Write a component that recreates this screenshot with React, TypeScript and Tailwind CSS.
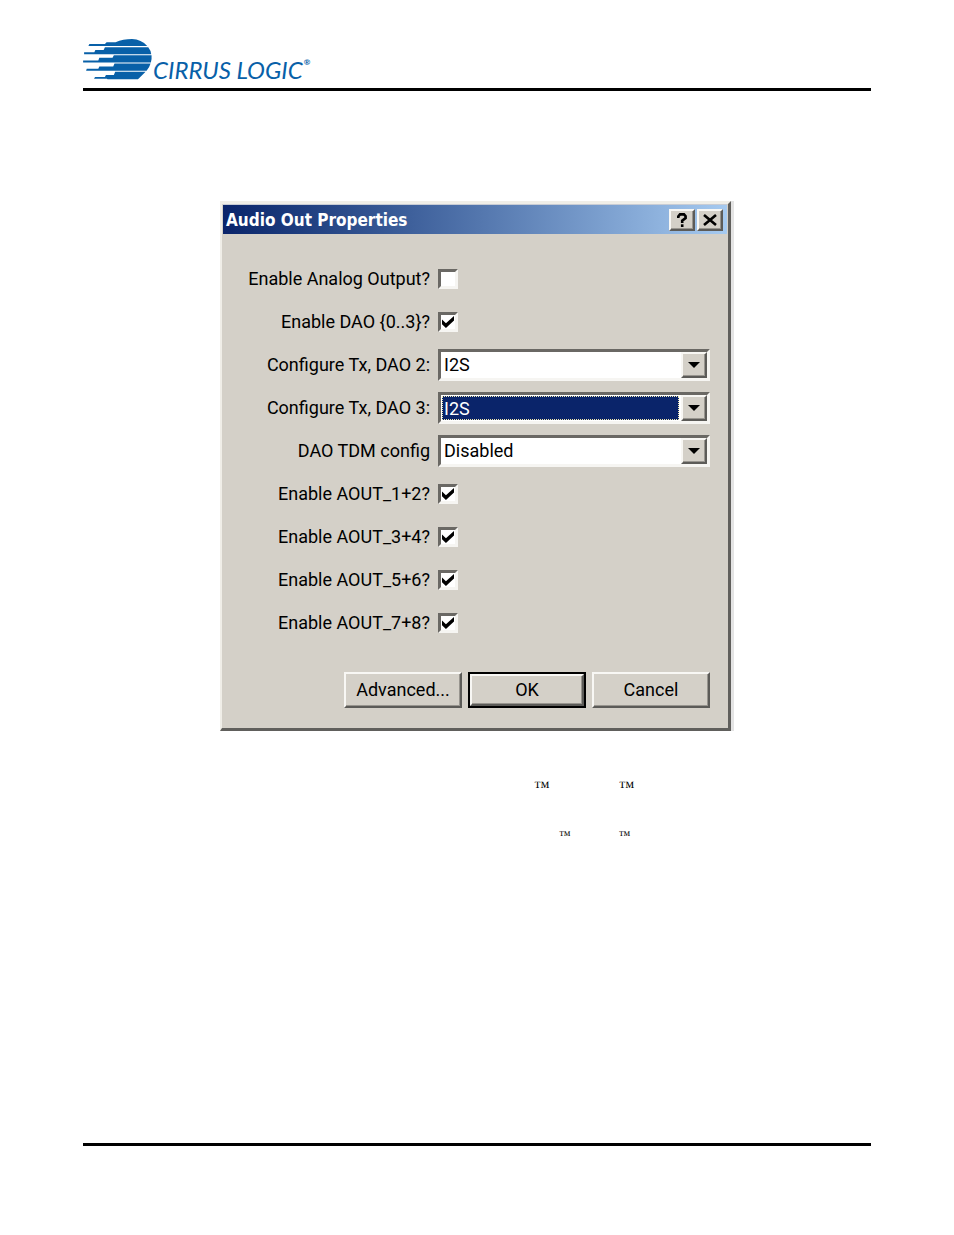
import { useState } from "react";

interface CheckRowProps {
  id: string;
  label: string;
  defaultChecked?: boolean;
}

interface SelectRowProps {
  id: string;
  label: string;
  value: string;
  options: string[];
  focused?: boolean;
}

const raised =
  "bg-[#d4d0c8] border-2 border-t-[#f8f7f4] border-l-[#f8f7f4] border-r-[#5c5b58] border-b-[#5c5b58] shadow-[inset_-1px_-1px_0_#98958f]";
const sunken =
  "border-[3px] border-t-[#6a6864] border-l-[#6a6864] border-r-[#f6f5f2] border-b-[#f6f5f2]";

function Logo() {
  return (
    <a href="#" className="flex items-end text-[#0860a8]" aria-label="Cirrus Logic">
      <svg viewBox="24 27 208 124" className="w-[69px] h-[41px] shrink-0" fill="currentColor" aria-hidden="true">
        <path d="M40 48 L43 42 H90 L95 37 H122 Q145 27 172 27 Q200 28 218 48 Z" />
        <path d="M27 73 V67 H58 L61 60 H86 L90 52 H221 Q229 62 230 73 Z" />
        <path d="M24 98 V92 H70 L73 84 H113 L117 76 H231 Q232 88 229 98 Z" />
        <path d="M33 123 L35 117 H70 L73 110 H115 L119 101 H228 Q225 112 216 123 Z" />
        <path d="M57 147 L60 142 H90 L93 136 H117 L121 126 H213 L190 149 H98 L96 147 Z" />
      </svg>
      <span className="ml-px font-['Lato',sans-serif] italic text-2xl leading-5 whitespace-nowrap">CIRRUS LOGIC</span>
      <span className="ml-px font-['Lato',sans-serif] font-bold text-[8px] leading-none self-center pt-1">®</span>
    </a>
  );
}

function CheckRow({ id, label, defaultChecked = false }: CheckRowProps) {
  return (
    <div className="grid grid-cols-[207px_1fr] items-center gap-2 h-[43px]">
      <label htmlFor={id} className="text-right whitespace-nowrap">
        {label}
      </label>
      <div className="relative w-5 h-5">
        <input
          id={id}
          type="checkbox"
          defaultChecked={defaultChecked}
          className={`peer block appearance-none w-5 h-5 bg-white ${sunken}`}
        />
        <svg
          viewBox="0 0 7 7"
          className="hidden peer-checked:block absolute left-1 top-1 w-3 h-3 pointer-events-none"
          aria-hidden="true"
        >
          <path d="M0 2 L2.3 4.2 L7 0 V2.6 L2.3 7 L0 4.8 Z" fill="#000" />
        </svg>
      </div>
    </div>
  );
}

function SelectRow({ id, label, value, options, focused = false }: SelectRowProps) {
  const [current, setCurrent] = useState(value);

  return (
    <div className="grid grid-cols-[207px_1fr] items-center gap-2 h-[43px]">
      <label htmlFor={id} className="text-right whitespace-nowrap">
        {label}
      </label>
      <div className={`relative flex h-8 bg-white ${sunken}`}>
        <select
          id={id}
          value={current}
          onChange={(e) => setCurrent(e.target.value)}
          className={
            focused
              ? "flex-1 min-w-0 appearance-none outline-none px-px mr-7 ml-px my-px bg-[#0a246a] text-white border border-dotted border-[#f0e8b0]"
              : "flex-1 min-w-0 appearance-none outline-none px-[3px] bg-white"
          }
        >
          {options.map((o) => (
            <option key={o}>{o}</option>
          ))}
        </select>
        <span className={`absolute right-0 inset-y-0 w-[26px] flex items-center justify-center pointer-events-none ${raised}`}>
          <svg viewBox="0 0 12 6" className="w-3 h-[6px]" aria-hidden="true">
            <path d="M0 0 H12 L6 6 Z" fill="#000" />
          </svg>
        </span>
      </div>
    </div>
  );
}

export default function App() {
  return (
    <div className="min-h-screen bg-white flex flex-col px-[83px] pt-[39px] pb-[89px] text-black">
      <header className="border-b-[3px] border-black pb-2">
        <Logo />
      </header>

      <main className="flex flex-col items-center pt-[110px]">
        <section
          role="dialog"
          aria-labelledby="dialog-title"
          className="w-full max-w-[514px] border-r-[3px] border-[#e4e4e4] font-['Roboto',sans-serif] text-lg leading-6"
        >
          <div className="bg-[#d4d0c8] border-t-[3px] border-l-2 border-r-[3px] border-b-[3px] border-t-[#f0eee8] border-l-[#f0eee8] border-r-[#605f5c] border-b-[#605f5c]">
            <div className="flex items-center h-[30px] mx-px pl-[3px] pr-1 bg-linear-to-r from-[#0a246a] to-[#a6caf0] border-t border-[#c8ccd4]">
              <h1
                id="dialog-title"
                className="flex-1 font-['DejaVu_Sans_Condensed','DejaVu_Sans',sans-serif] font-bold text-[17px] text-white"
              >
                Audio Out Properties
              </h1>
              <button type="button" aria-label="Help" className={`w-[26px] h-[22px] flex items-center justify-center ${raised}`}>
                <svg viewBox="0 0 10 14" className="w-[10px] h-[14px]" fill="none" stroke="#000" strokeWidth="2.6" aria-hidden="true">
                  <path d="M1.3 5 V3.5 L3 1.4 H7 L8.6 3.2 V5 L5.2 7.6 V10" />
                  <path d="M5.2 11.3 V14" />
                </svg>
              </button>
              <button type="button" aria-label="Close" className={`w-[26px] h-[22px] ml-[2px] flex items-center justify-center ${raised}`}>
                <svg viewBox="0 0 14 12" className="w-[14px] h-3" fill="none" stroke="#000" strokeWidth="2.6" aria-hidden="true">
                  <path d="M1 1 L13 11 M13 1 L1 11" />
                </svg>
              </button>
            </div>

            <form className="pl-px pr-[18px] pt-[23px] pb-5" onSubmit={(e) => e.preventDefault()}>
              <CheckRow id="analog" label="Enable Analog Output?" />
              <CheckRow id="dao03" label="Enable DAO {0..3}?" defaultChecked />
              <SelectRow id="dao2" label="Configure Tx, DAO 2:" value="I2S" options={["I2S", "Left Justified"]} />
              <SelectRow id="dao3" label="Configure Tx, DAO 3:" value="I2S" options={["I2S", "Left Justified"]} focused />
              <SelectRow id="tdm" label="DAO TDM config" value="Disabled" options={["Disabled", "Enabled"]} />
              <CheckRow id="aout12" label="Enable AOUT_1+2?" defaultChecked />
              <CheckRow id="aout34" label="Enable AOUT_3+4?" defaultChecked />
              <CheckRow id="aout56" label="Enable AOUT_5+6?" defaultChecked />
              <CheckRow id="aout78" label="Enable AOUT_7+8?" defaultChecked />

              <div className="flex justify-end gap-[6px] pt-7">
                <button type="button" className={`w-[118px] h-9 ${raised}`}>
                  Advanced...
                </button>
                <button type="submit" className="w-[118px] h-9 bg-black p-[2px]">
                  <span className={`flex h-full items-center justify-center ${raised}`}>OK</span>
                </button>
                <button type="button" className={`w-[118px] h-9 ${raised}`}>
                  Cancel
                </button>
              </div>
            </form>
          </div>
        </section>

        <div className="w-full max-w-[514px] pt-11 font-['Liberation_Serif',serif]">
          <p className="flex gap-[69px] pl-[314px] text-base leading-6">
            <span>™</span>
            <span>™</span>
          </p>
          <p className="flex gap-12 pl-[339px] pt-6 text-xs leading-6">
            <span>™</span>
            <span>™</span>
          </p>
        </div>
      </main>

      <footer className="mt-auto border-t-[3px] border-black" />
    </div>
  );
}
